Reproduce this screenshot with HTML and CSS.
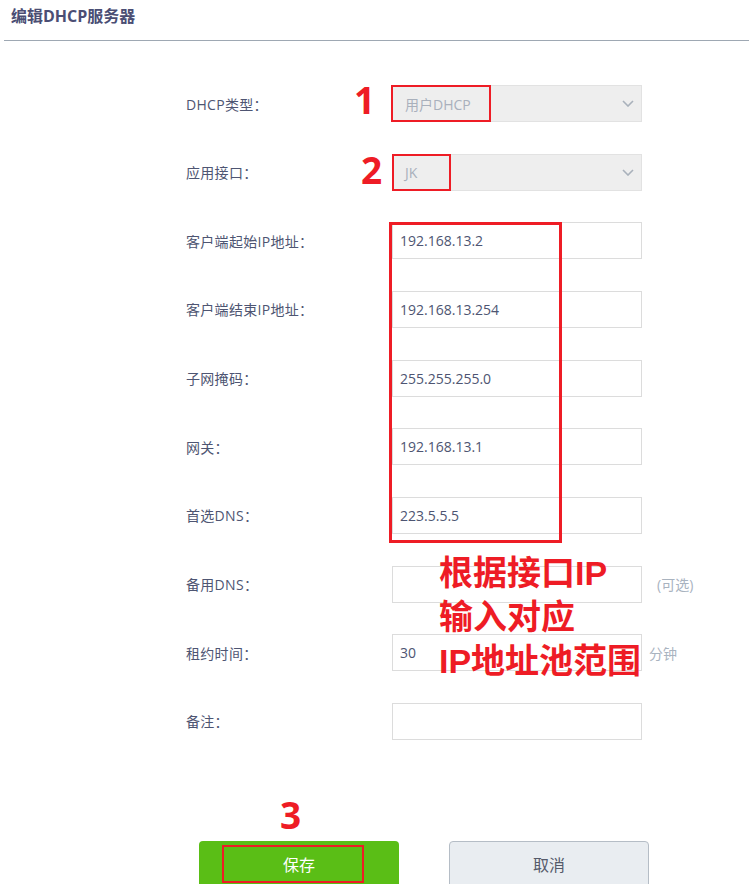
FILE: index.html
```html
<!DOCTYPE html>
<html lang="zh-CN">
<head>
  <meta charset="UTF-8">
  <meta name="viewport" content="width=device-width, initial-scale=1.0">
  <title>编辑DHCP服务器</title>
  <link rel="stylesheet" href="styles.css">
</head>
<body>
  <div class="page">
    <div class="page-head">
      <h1 class="page-title">编辑DHCP服务器</h1>
    </div>

    <div class="dhcp-form">
      <div class="form-row">
        <label class="form-label">DHCP类型：</label>
        <div class="select-box">
          <span>用户DHCP</span>
          <svg class="chevron" width="12" height="7" viewBox="0 0 12 7"><path d="M1 1l5 5 5-5" fill="none" stroke="#a9b1bb" stroke-width="1.6"/></svg>
        </div>
      </div>
      <div class="form-row">
        <label class="form-label">应用接口：</label>
        <div class="select-box">
          <span>JK</span>
          <svg class="chevron" width="12" height="7" viewBox="0 0 12 7"><path d="M1 1l5 5 5-5" fill="none" stroke="#a9b1bb" stroke-width="1.6"/></svg>
        </div>
      </div>
      <div class="form-row">
        <label class="form-label">客户端起始IP地址：</label>
        <input class="text-input" type="text" value="192.168.13.2">
      </div>
      <div class="form-row">
        <label class="form-label">客户端结束IP地址：</label>
        <input class="text-input" type="text" value="192.168.13.254">
      </div>
      <div class="form-row">
        <label class="form-label">子网掩码：</label>
        <input class="text-input" type="text" value="255.255.255.0">
      </div>
      <div class="form-row">
        <label class="form-label">网关：</label>
        <input class="text-input" type="text" value="192.168.13.1">
      </div>
      <div class="form-row">
        <label class="form-label">首选DNS：</label>
        <input class="text-input" type="text" value="223.5.5.5">
      </div>
      <div class="form-row">
        <label class="form-label">备用DNS：</label>
        <input class="text-input" type="text" value="">
        <span class="suffix suffix-wide">(可选)</span>
      </div>
      <div class="form-row">
        <label class="form-label">租约时间：</label>
        <input class="text-input" type="text" value="30">
        <span class="suffix">分钟</span>
      </div>
      <div class="form-row">
        <label class="form-label">备注：</label>
        <input class="text-input" type="text" value="">
      </div>
    </div>

    <div class="btn-bar">
      <button class="btn btn-save">保存</button>
      <button class="btn btn-cancel">取消</button>
    </div>

    <!-- 标注 -->
    <div class="mark-num mark-1">1</div>
    <div class="mark-box box-1"></div>
    <div class="mark-num mark-2">2</div>
    <div class="mark-box box-2"></div>
    <div class="mark-box box-3"></div>
    <div class="mark-note">根据接口IP<br>输入对应<br>IP地址池范围</div>
    <div class="mark-num mark-3">3</div>
    <div class="mark-box box-4"></div>
  </div>
</body>
</html>
```
FILE: styles.css
```css
body {
  margin: 0;
  font-family: "Open Sans", "Noto Sans CJK SC", sans-serif;
  color: #4e5572;
  background: #fff;
}

.page {
  position: relative;
  width: 749px;
  height: 884px;
  overflow: hidden;
}

.page-head {
  margin-left: 4px;
  height: 40px;
  border-bottom: 1px solid #9ea8b3;
  padding-left: 7px;
}

.page-title {
  margin: 0;
  font-size: 16px;
  line-height: 32px;
  font-weight: bold;
  color: #4b4e74;
}

.dhcp-form {
  margin-top: 44px;
  padding-left: 186px;
}

.form-row {
  display: flex;
  align-items: center;
  height: 37px;
  margin-bottom: 31.67px;
}

.form-row:last-child {
  margin-bottom: 0;
}

.form-label {
  width: 206px;
  font-size: 14px;
  letter-spacing: 0.3px;
  color: #4e5572;
}

.select-box {
  box-sizing: border-box;
  width: 250px;
  height: 37px;
  display: flex;
  align-items: center;
  justify-content: space-between;
  padding: 0 7px 0 12px;
  background: #eeeeee;
  border: 1px solid #e2e2e2;
  font-size: 14px;
  color: #a9b0bc;
}

.text-input {
  box-sizing: border-box;
  width: 250px;
  height: 37px;
  padding: 0 7px;
  border: 1px solid #dcdcdc;
  font-family: inherit;
  font-size: 14px;
  color: #4e5572;
  outline: none;
}

.suffix {
  margin-left: 7px;
  font-size: 14px;
  color: #a9b3bf;
}

.suffix-wide {
  margin-left: 15px;
}

.btn-bar {
  display: flex;
  gap: 50px;
  margin-top: 101px;
  padding-left: 199px;
}

.btn {
  box-sizing: border-box;
  width: 200px;
  height: 46px;
  border-radius: 4px 4px 0 0;
  font-family: inherit;
  font-size: 16px;
  cursor: pointer;
}

.btn-save {
  background: #5abe16;
  border: none;
  color: #fff;
}

.btn-cancel {
  background: #e9edf1;
  border: 1px solid #b5bdc6;
  color: #555a6a;
}

/* 红色标注 */
.mark-num {
  position: absolute;
  font-family: "Open Sans", sans-serif;
  font-weight: bold;
  font-size: 37px;
  line-height: 37px;
  color: #ee1c25;
}

.mark-1 { left: 354px; top: 81px; }
.mark-2 { left: 361px; top: 151px; }
.mark-3 { left: 280px; top: 796px; }

.mark-box {
  position: absolute;
  box-sizing: border-box;
  border: 2px solid #ee1c25;
}

.box-1 { left: 391px; top: 85px; width: 100px; height: 37px; }
.box-2 { left: 392px; top: 154px; width: 59px; height: 37px; }
.box-3 { left: 389px; top: 222px; width: 173px; height: 321px; border-width: 3px; }
.box-4 { left: 222px; top: 845px; width: 142px; height: 38px; }

.mark-note {
  position: absolute;
  left: 439px;
  top: 551px;
  font-family: "Liberation Sans", "Noto Sans CJK SC", sans-serif;
  font-weight: bold;
  font-size: 34px;
  line-height: 44px;
  color: #ee1c25;
}
```
